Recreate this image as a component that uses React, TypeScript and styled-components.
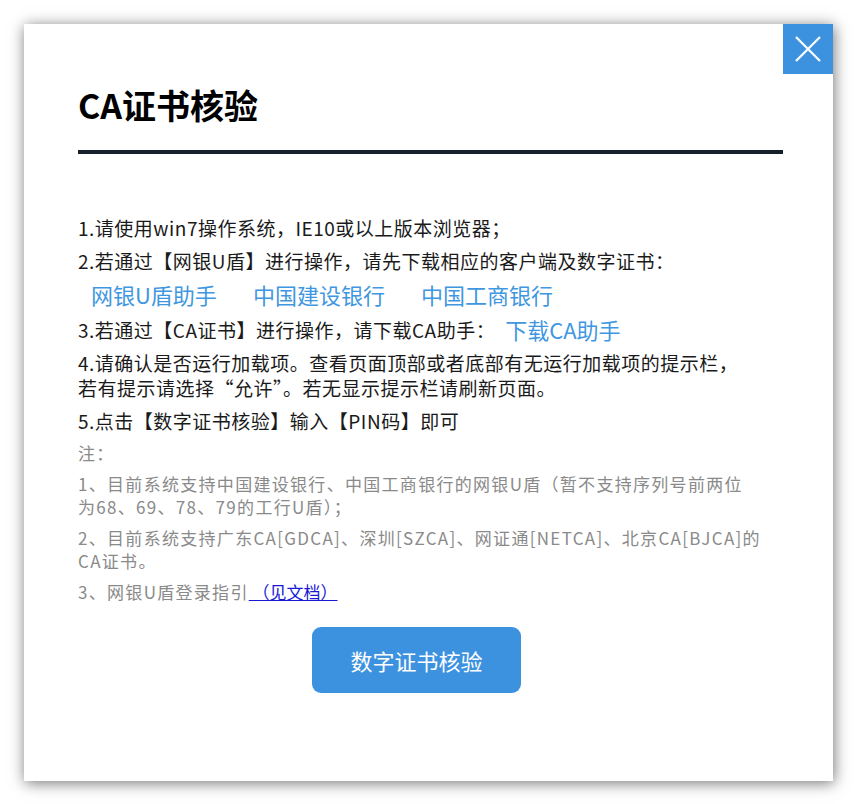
import React, { FunctionComponent, ReactElement } from 'react';
import styled, { createGlobalStyle } from 'styled-components';

const FONT = '"Microsoft YaHei", "Noto Sans CJK SC", "Noto Sans", sans-serif';
const BLUE = '#3d92e0';

const GlobalStyle = createGlobalStyle`
    html, body {
        margin: 0;
        padding: 0;
        background: #ffffff;
        font-family: ${FONT};
    }
`;

const Page = styled.div`
    width: 858px;
    height: 804px;
    padding: 24px 25px 23px 24px;
    box-sizing: border-box;
`;

const Dialog = styled.div`
    position: relative;
    width: 809px;
    height: 757px;
    box-sizing: border-box;
    padding: 61px 50px 0 54px;
    background: #ffffff;
    box-shadow: 1px 2px 14px rgba(0, 0, 0, 0.55);
`;

const CloseButton = styled.button`
    position: absolute;
    top: 0;
    right: 0;
    width: 50px;
    height: 50px;
    padding: 0;
    border: 0;
    background: ${BLUE};
    display: flex;
    align-items: center;
    justify-content: center;
    cursor: pointer;
`;

const Title = styled.h1`
    margin: 0 0 25px;
    font-size: 34px;
    line-height: 40px;
    font-weight: 700;
    color: #000000;
`;

const Divider = styled.div`
    height: 4px;
    background: #15202c;
`;

const Content = styled.div`
    margin-top: 61px;
`;

const Step = styled.p`
    margin: 0 0 8px;
    font-size: 19px;
    line-height: 25px;
    letter-spacing: 0.5px;
    color: #1a1a1a;
    white-space: nowrap;
`;

const LinkRow = styled.div`
    display: flex;
    gap: 36px;
    padding-left: 13px;
    margin-bottom: 9px;
`;

interface IBlueLink {
    inline?: boolean;
}

const BlueLink = styled.a<IBlueLink>`
    font-size: 22px;
    line-height: 26px;
    letter-spacing: 0;
    color: #3f97e1;
    text-decoration: none;
    margin-left: ${({ inline }: IBlueLink): string => (inline ? '10px' : '0')};
    vertical-align: ${({ inline }: IBlueLink): string => (inline ? '-1px' : 'baseline')};
    cursor: pointer;
`;

const Notes = styled.div`
    margin-top: 2px;
`;

const Note = styled.p`
    margin: 0 0 8px;
    font-size: 17px;
    line-height: 23px;
    letter-spacing: 1.3px;
    color: #8a8a8a;
    white-space: nowrap;
`;

const DocLink = styled.a`
    color: #1a1ad6;
    text-decoration: underline;
    letter-spacing: 0;
`;

const Footer = styled.div`
    display: flex;
    margin-top: 24px;
    padding-left: 234px;
`;

const VerifyButton = styled.button`
    width: 209px;
    height: 66px;
    border: 0;
    border-radius: 9px;
    background: ${BLUE};
    color: #ffffff;
    font-family: ${FONT};
    font-size: 22px;
    cursor: pointer;
`;

const CloseIcon: FunctionComponent = (): ReactElement => (
    <svg width="28" height="28" viewBox="0 0 28 28" fill="none">
        <path d="M2 2 L26 26 M26 2 L2 26" stroke="#ffffff" strokeWidth="2.2" />
    </svg>
);

const banks = ['网银U盾助手', '中国建设银行', '中国工商银行'];

const App: FunctionComponent = (): ReactElement => (
    <Page>
        <GlobalStyle />
        <Dialog>
            <CloseButton aria-label="close">
                <CloseIcon />
            </CloseButton>
            <Title>CA证书核验</Title>
            <Divider />
            <Content>
                <Step>1.请使用win7操作系统，IE10或以上版本浏览器；</Step>
                <Step>2.若通过【网银U盾】进行操作，请先下载相应的客户端及数字证书：</Step>
                <LinkRow>
                    {banks.map(
                        (bank: string): ReactElement => (
                            <BlueLink key={bank}>{bank}</BlueLink>
                        )
                    )}
                </LinkRow>
                <Step>
                    3.若通过【CA证书】进行操作，请下载CA助手：
                    <BlueLink inline>下载CA助手</BlueLink>
                </Step>
                <Step>
                    4.请确认是否运行加载项。查看页面顶部或者底部有无运行加载项的提示栏，
                    <br />
                    若有提示请选择“允许”。若无显示提示栏请刷新页面。
                </Step>
                <Step>5.点击【数字证书核验】输入【PIN码】即可</Step>
                <Notes>
                    <Note>注：</Note>
                    <Note>
                        1、目前系统支持中国建设银行、中国工商银行的网银U盾（暂不支持序列号前两位
                        <br />
                        为68、69、78、79的工行U盾）；
                    </Note>
                    <Note>
                        2、目前系统支持广东CA[GDCA]、深圳[SZCA]、网证通[NETCA]、北京CA[BJCA]的
                        <br />
                        CA证书。
                    </Note>
                    <Note>
                        3、网银U盾登录指引<DocLink> （见文档） </DocLink>
                    </Note>
                </Notes>
            </Content>
            <Footer>
                <VerifyButton>数字证书核验</VerifyButton>
            </Footer>
        </Dialog>
    </Page>
);

export default App;
